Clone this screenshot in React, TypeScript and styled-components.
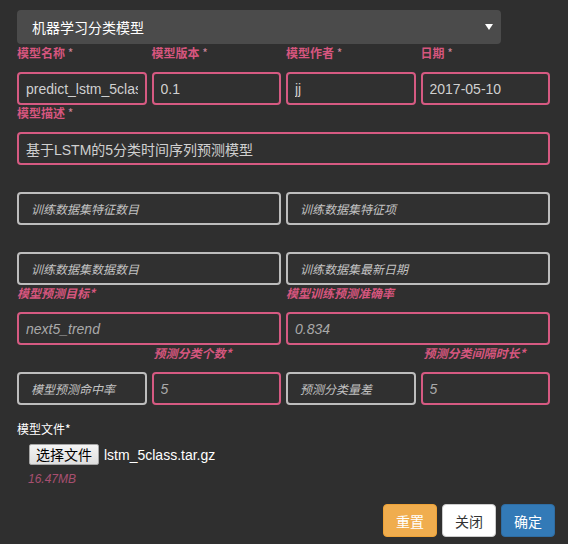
import React from "react";
import styled, { createGlobalStyle, css } from "styled-components";

const GlobalStyle = createGlobalStyle`
  html, body {
    margin: 0;
    padding: 0;
    background: #2f2f2f;
  }
  body {
    font-family: "Liberation Sans", Arial, "Noto Sans CJK SC", sans-serif;
  }
  * { box-sizing: border-box; }
`;

const Page = styled.div`
  width: 568px;
  height: 544px;
  padding: 10px 18px 0 17px;
  background: #2f2f2f;
  overflow: hidden;
`;

const Select = styled.div`
  width: 484px;
  height: 34px;
  border-radius: 4px;
  background: #4b4b4b;
  display: flex;
  align-items: center;
  justify-content: space-between;
  padding: 0 8px 0 15px;
  color: #ffffff;
  font-size: 14px;
  font-family: "Noto Sans CJK SC", sans-serif;
`;

const Grid = styled.div`
  margin-top: 1px;
  display: grid;
  grid-template-columns: repeat(4, 1fr);
  column-gap: 5px;
`;

const Field = styled.div<{ $span?: number }>`
  grid-column: span ${(p) => p.$span ?? 1};
  display: flex;
  flex-direction: column;
`;

const Label = styled.div<{ $italic?: boolean; $indent?: number }>`
  height: 27px;
  line-height: 15px;
  font-size: 12px;
  font-weight: bold;
  color: #d6567e;
  white-space: nowrap;
  padding-left: ${(p) => p.$indent ?? 0}px;
  font-family: "Noto Sans CJK SC", sans-serif;
  font-style: ${(p) => (p.$italic ? "italic" : "normal")};
`;

const Star = styled.span`
  color: #c98399;
  font-weight: normal;
`;

const Input = styled.input<{ $tone: "pink" | "gray"; $italic?: boolean }>`
  width: 100%;
  height: 33px;
  margin: 0;
  border-radius: 4px;
  border: 2px solid ${(p) => (p.$tone === "pink" ? "#d65a82" : "#bdbdbd")};
  background: #303030;
  color: ${(p) => (p.$italic ? "#a9a9a9" : "#d0d0d0")};
  font-size: 14px;
  font-family: "Liberation Sans", Arial, "Noto Sans CJK SC", sans-serif;
  font-style: ${(p) => (p.$italic ? "italic" : "normal")};
  padding: 0 7px;
  outline: none;
  ${(p) =>
    p.$tone === "gray" &&
    css`
      text-indent: 5px;
    `}
  &::placeholder {
    color: #c2c2c2;
    font-style: italic;
    font-size: 12px;
    font-family: "Noto Sans CJK SC", sans-serif;
    opacity: 1;
  }
`;

const FileLabel = styled.div`
  margin-top: 16px;
  font-size: 12px;
  line-height: 15px;
  color: #ffffff;
  font-family: "Noto Sans CJK SC", sans-serif;
`;

const FileRow = styled.div`
  margin: 8px 0 0 12px;
  display: flex;
  align-items: center;
  gap: 5px;
`;

const FileButton = styled.button`
  height: 21px;
  padding: 0 6px;
  border: 1px solid #a6a6a6;
  border-radius: 2px;
  background: linear-gradient(#f4f4f4, #dedede);
  color: #000;
  font-size: 14px;
  line-height: 19px;
  font-family: "Noto Sans CJK SC", sans-serif;
`;

const FileName = styled.span`
  color: #ffffff;
  font-size: 14px;
  font-family: "Liberation Sans", Arial, sans-serif;
`;

const FileSize = styled.div`
  margin: 7px 0 0 11px;
  font-size: 12px;
  line-height: 14px;
  font-style: italic;
  color: #a84f70;
  font-family: "Liberation Sans", Arial, sans-serif;
`;

const Actions = styled.div`
  margin-top: 18px;
  margin-right: -5px;
  display: flex;
  justify-content: flex-end;
  gap: 5px;
`;

const Btn = styled.button<{ $kind: "warning" | "default" | "primary" }>`
  width: 54px;
  height: 33px;
  border-radius: 4px;
  font-size: 14px;
  font-family: "Noto Sans CJK SC", sans-serif;
  border: 1px solid
    ${(p) => (p.$kind === "warning" ? "#eea236" : p.$kind === "primary" ? "#2e6da4" : "#cccccc")};
  background: ${(p) => (p.$kind === "warning" ? "#f0ad4e" : p.$kind === "primary" ? "#337ab7" : "#ffffff")};
  color: ${(p) => (p.$kind === "default" ? "#333333" : "#ffffff")};
  padding: 0;
`;

const Arrow = () => (
  <svg width="8" height="6" viewBox="0 0 8 6">
    <path d="M0 0 L8 0 L4 6 Z" fill="#ffffff" />
  </svg>
);

export default function App() {
  return (
    <>
      <GlobalStyle />
      <Page>
        <Select>
          <span>机器学习分类模型</span>
          <Arrow />
        </Select>
        <Grid>
          <Field>
            <Label>
              模型名称 <Star>*</Star>
            </Label>
            <Input $tone="pink" defaultValue="predict_lstm_5class" />
          </Field>
          <Field>
            <Label>
              模型版本 <Star>*</Star>
            </Label>
            <Input $tone="pink" defaultValue="0.1" />
          </Field>
          <Field>
            <Label>
              模型作者 <Star>*</Star>
            </Label>
            <Input $tone="pink" defaultValue="jj" />
          </Field>
          <Field>
            <Label>
              日期 <Star>*</Star>
            </Label>
            <Input $tone="pink" defaultValue="2017-05-10" />
          </Field>

          <Field $span={4}>
            <Label>
              模型描述 <Star>*</Star>
            </Label>
            <Input $tone="pink" defaultValue="基于LSTM的5分类时间序列预测模型" />
          </Field>

          <Field $span={2}>
            <Label />
            <Input $tone="gray" placeholder="训练数据集特征数目" />
          </Field>
          <Field $span={2}>
            <Label />
            <Input $tone="gray" placeholder="训练数据集特征项" />
          </Field>

          <Field $span={2}>
            <Label />
            <Input $tone="gray" placeholder="训练数据集数据数目" />
          </Field>
          <Field $span={2}>
            <Label />
            <Input $tone="gray" placeholder="训练数据集最新日期" />
          </Field>

          <Field $span={2}>
            <Label $italic>模型预测目标*</Label>
            <Input $tone="pink" $italic defaultValue="next5_trend" />
          </Field>
          <Field $span={2}>
            <Label $italic>模型训练预测准确率</Label>
            <Input $tone="pink" $italic defaultValue="0.834" />
          </Field>

          <Field>
            <Label />
            <Input $tone="gray" placeholder="模型预测命中率" />
          </Field>
          <Field>
            <Label $italic $indent={2}>预测分类个数*</Label>
            <Input $tone="pink" $italic defaultValue="5" />
          </Field>
          <Field>
            <Label />
            <Input $tone="gray" placeholder="预测分类量差" />
          </Field>
          <Field>
            <Label $italic $indent={3}>预测分类间隔时长*</Label>
            <Input $tone="pink" $italic defaultValue="5" />
          </Field>
        </Grid>

        <FileLabel>模型文件*</FileLabel>
        <FileRow>
          <FileButton>选择文件</FileButton>
          <FileName>lstm_5class.tar.gz</FileName>
        </FileRow>
        <FileSize>16.47MB</FileSize>

        <Actions>
          <Btn $kind="warning">重置</Btn>
          <Btn $kind="default">关闭</Btn>
          <Btn $kind="primary">确定</Btn>
        </Actions>
      </Page>
    </>
  );
}
